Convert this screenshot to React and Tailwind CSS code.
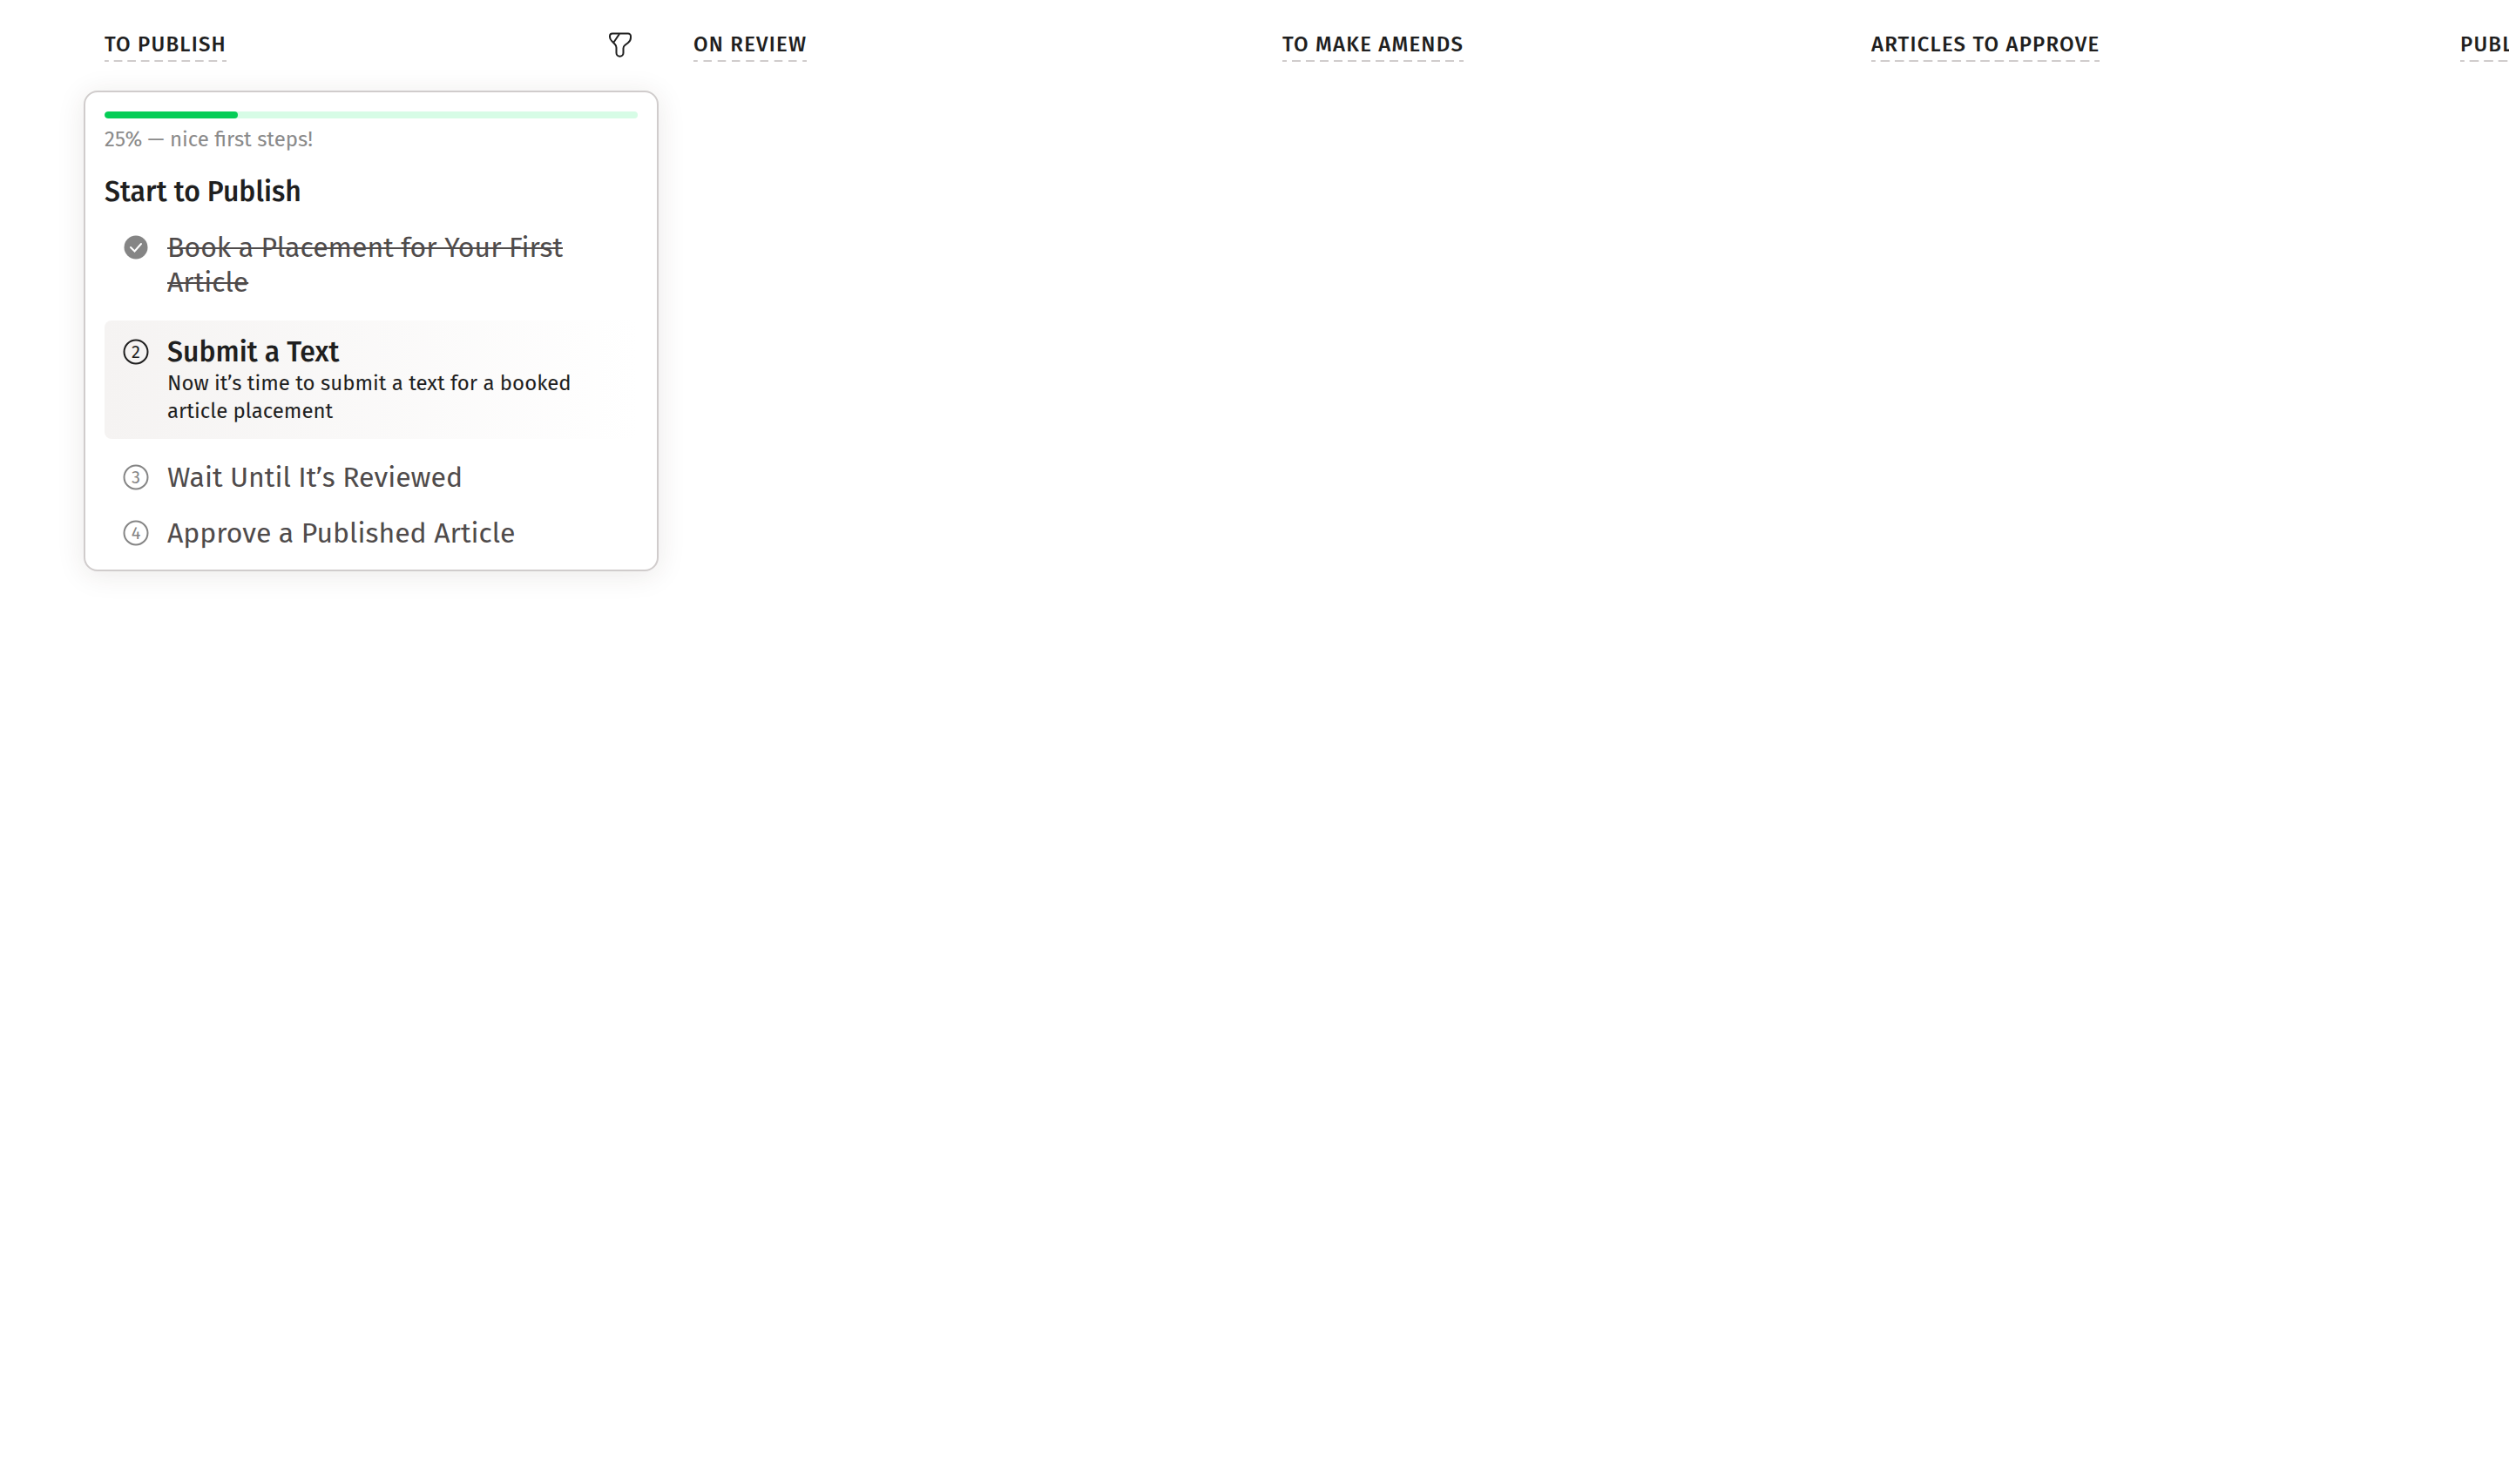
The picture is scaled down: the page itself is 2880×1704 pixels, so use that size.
import React from "react";

const columns = [
  { id: "publish", title: "To publish", hasFilter: true },
  { id: "review", title: "On review" },
  { id: "amends", title: "To make amends" },
  { id: "approve", title: "Articles to approve" },
  { id: "published", title: "Published" },
];

const steps = [
  { number: 1, title: "Book a Placement for Your First Article", status: "done" },
  {
    number: 2,
    title: "Submit a Text",
    text: "Now it’s time to submit a text for a booked article placement",
    status: "current",
  },
  { number: 3, title: "Wait Until It’s Reviewed", status: "next" },
  { number: 4, title: "Approve a Published Article", status: "next" },
];

function FilterIcon() {
  return (
    <svg viewBox="0 0 32 32" className="size-8" fill="none" stroke="currentColor" strokeWidth="2" strokeLinejoin="round">
      <path d="M7 3.500h18a3 3 0 0 1 3 3v1.700c0 2.800-1.200 4.400-3.200 6l-3.300 2.600c-1.500 1.200-2 2-2 3.600v5.400a4 4 0 0 1-8 0v-6c0-1.800-.5-2.800-1.700-4l-3.300-3.400C4.900 10.800 4 9.500 4 7.500v-1a3 3 0 0 1 3-3z" />
      <path d="M15 4 8.500 13.500" />
    </svg>
  );
}

function StepIcon({ number, status }) {
  if (status === "done") {
    return (
      <svg viewBox="0 0 32 32" className="size-8 text-[#858585]">
        <circle cx="16" cy="16" r="13.500" fill="currentColor" />
        <path d="m10 16 4.500 4.500L22 12" fill="none" stroke="#fff" strokeWidth="2" strokeLinecap="round" />
      </svg>
    );
  }

  return (
    <svg viewBox="0 0 32 32" className={status === "current" ? "size-8 text-[#1f1f1f]" : "size-8 text-[#858585]"}>
      <circle cx="16" cy="16" r="13.500" fill="none" stroke="currentColor" strokeWidth="2" />
      <text x="16" y="23" textAnchor="middle" fontSize="20" fill="currentColor">
        {number}
      </text>
    </svg>
  );
}

function Step({ step }) {
  const current = step.status === "current";

  return (
    <li
      className={`flex items-start gap-5 px-5 ${
        current ? "rounded-lg bg-linear-to-r from-[#f5f3f2] to-white py-4 text-[#1f1f1f]" : "text-[#4f4b4b]"
      }`}
    >
      <div className="flex h-10 shrink-0 items-center">
        <StepIcon number={step.number} status={step.status} />
      </div>
      <div>
        <h3
          className={`text-[32px] leading-10 ${current ? "font-medium" : ""} ${
            step.status === "done" ? "line-through decoration-2" : ""
          }`}
        >
          {step.title}
        </h3>
        {step.text && <p className="text-2xl leading-8">{step.text}</p>}
      </div>
    </li>
  );
}

function ProgressCard({ percent }) {
  return (
    <section className="rounded-2xl border-2 border-[#d0cccc] bg-white p-[22px] shadow-[0_4px_32px_rgba(60,40,30,0.1)]">
      <div
        role="progressbar"
        aria-label="Start to Publish"
        aria-valuenow={percent}
        className="h-2 overflow-hidden rounded bg-[#d7fce6]"
      >
        <div className="h-full rounded bg-[#05cd56]" style={{ width: `${percent}%` }} />
      </div>
      <p className="mt-2 text-2xl leading-8 text-[#8a8a8a]">{percent}% — nice first steps!</p>
      <h2 className="mt-6 text-[32px] leading-10 font-medium">Start to Publish</h2>
      <ol className="mt-6 flex flex-col gap-6">
        {steps.map((step) => (
          <Step key={step.number} step={step} />
        ))}
      </ol>
    </section>
  );
}

function Column({ column, children }) {
  return (
    <div className="w-[660px] shrink-0">
      <div className="flex h-26 items-start justify-between px-6 pt-[35px]">
        <button type="button" className="text-2xl leading-8 font-medium tracking-wider uppercase">
          {column.title}
          <span className="mt-[2px] block h-[2px] bg-[linear-gradient(90deg,#d0cccc_5px,transparent_5px,transparent_11px,#d0cccc_11px)] [background-repeat:round] [background-size:16px_2px]" />
        </button>
        {column.hasFilter && (
          <button type="button" aria-label="Filter" className="mr-1">
            <FilterIcon />
          </button>
        )}
      </div>
      {children}
    </div>
  );
}

export default function App() {
  return (
    <main className="flex min-h-screen gap-4 overflow-hidden bg-white pl-24 font-['Fira_Sans','Noto_Sans',sans-serif] text-[#1f1f1f]">
      {columns.map((column) => (
        <Column key={column.id} column={column}>
          {column.hasFilter && <ProgressCard percent={25} />}
        </Column>
      ))}
    </main>
  );
}
